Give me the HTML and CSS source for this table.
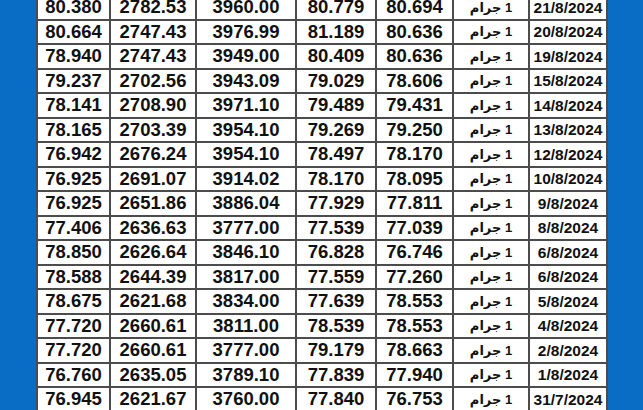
FILE: index.html
```html
<!DOCTYPE html>
<html lang="ar">
<head>
<meta charset="utf-8">
<link rel="stylesheet" href="styles.css">
</head>
<body>
<div class="page">
  <div class="side"></div>
  <div class="sheet">
    <div class="c">80.380</div><div class="c">2782.53</div><div class="c">3960.00</div><div class="c">80.779</div><div class="c">80.694</div><div class="c unit">1 جرام</div><div class="c date">21/8/2024</div>
    <div class="c">80.664</div><div class="c">2747.43</div><div class="c">3976.99</div><div class="c">81.189</div><div class="c">80.636</div><div class="c unit">1 جرام</div><div class="c date">20/8/2024</div>
    <div class="c">78.940</div><div class="c">2747.43</div><div class="c">3949.00</div><div class="c">80.409</div><div class="c">80.636</div><div class="c unit">1 جرام</div><div class="c date">19/8/2024</div>
    <div class="c">79.237</div><div class="c">2702.56</div><div class="c">3943.09</div><div class="c">79.029</div><div class="c">78.606</div><div class="c unit">1 جرام</div><div class="c date">15/8/2024</div>
    <div class="c">78.141</div><div class="c">2708.90</div><div class="c">3971.10</div><div class="c">79.489</div><div class="c">79.431</div><div class="c unit">1 جرام</div><div class="c date">14/8/2024</div>
    <div class="c">78.165</div><div class="c">2703.39</div><div class="c">3954.10</div><div class="c">79.269</div><div class="c">79.250</div><div class="c unit">1 جرام</div><div class="c date">13/8/2024</div>
    <div class="c">76.942</div><div class="c">2676.24</div><div class="c">3954.10</div><div class="c">78.497</div><div class="c">78.170</div><div class="c unit">1 جرام</div><div class="c date">12/8/2024</div>
    <div class="c">76.925</div><div class="c">2691.07</div><div class="c">3914.02</div><div class="c">78.170</div><div class="c">78.095</div><div class="c unit">1 جرام</div><div class="c date">10/8/2024</div>
    <div class="c">76.925</div><div class="c">2651.86</div><div class="c">3886.04</div><div class="c">77.929</div><div class="c">77.811</div><div class="c unit">1 جرام</div><div class="c date">9/8/2024</div>
    <div class="c">77.406</div><div class="c">2636.63</div><div class="c">3777.00</div><div class="c">77.539</div><div class="c">77.039</div><div class="c unit">1 جرام</div><div class="c date">8/8/2024</div>
    <div class="c">78.850</div><div class="c">2626.64</div><div class="c">3846.10</div><div class="c">76.828</div><div class="c">76.746</div><div class="c unit">1 جرام</div><div class="c date">6/8/2024</div>
    <div class="c">78.588</div><div class="c">2644.39</div><div class="c">3817.00</div><div class="c">77.559</div><div class="c">77.260</div><div class="c unit">1 جرام</div><div class="c date">6/8/2024</div>
    <div class="c">78.675</div><div class="c">2621.68</div><div class="c">3834.00</div><div class="c">77.639</div><div class="c">78.553</div><div class="c unit">1 جرام</div><div class="c date">5/8/2024</div>
    <div class="c">77.720</div><div class="c">2660.61</div><div class="c">3811.00</div><div class="c">78.539</div><div class="c">78.553</div><div class="c unit">1 جرام</div><div class="c date">4/8/2024</div>
    <div class="c">77.720</div><div class="c">2660.61</div><div class="c">3777.00</div><div class="c">79.179</div><div class="c">78.663</div><div class="c unit">1 جرام</div><div class="c date">2/8/2024</div>
    <div class="c">76.760</div><div class="c">2635.05</div><div class="c">3789.10</div><div class="c">77.839</div><div class="c">77.940</div><div class="c unit">1 جرام</div><div class="c date">1/8/2024</div>
    <div class="c">76.945</div><div class="c">2621.67</div><div class="c">3760.00</div><div class="c">77.840</div><div class="c">76.753</div><div class="c unit">1 جرام</div><div class="c date">31/7/2024</div>
  </div>
  <div class="side"></div>
</div>
</body>
</html>
```

FILE: styles.css
```css
html, body {
  margin: 0;
  padding: 0;
  background: #ffffff;
  overflow: hidden;
}

.page {
  display: flex;
  width: 643px;
  height: 410px;
  overflow: hidden;
}

.side {
  flex: 0 0 36px;
  background: #0a6dc5;
}

.side:last-child {
  flex-basis: 35px;
}

.sheet {
  flex: 1;
  align-self: flex-start;
  margin-top: -6px;
  display: grid;
  grid-template-columns: 71px 84px 98px 78px 75px 74px 76px;
  grid-auto-rows: 22.5px;
  gap: 2px;
  padding: 2px;
  background: #4c4c4c;
  font-family: "Liberation Sans", Arial, "DejaVu Sans", sans-serif;
  font-weight: bold;
  color: #111111;
}

.c {
  background: #ffffff;
  display: flex;
  align-items: center;
  justify-content: center;
  font-size: 18.5px;
  line-height: 1;
  white-space: nowrap;
}

.unit {
  direction: rtl;
  font-size: 13px;
  font-family: "Liberation Sans", "DejaVu Sans", sans-serif;
}

.date {
  font-size: 15.5px;
}
```
